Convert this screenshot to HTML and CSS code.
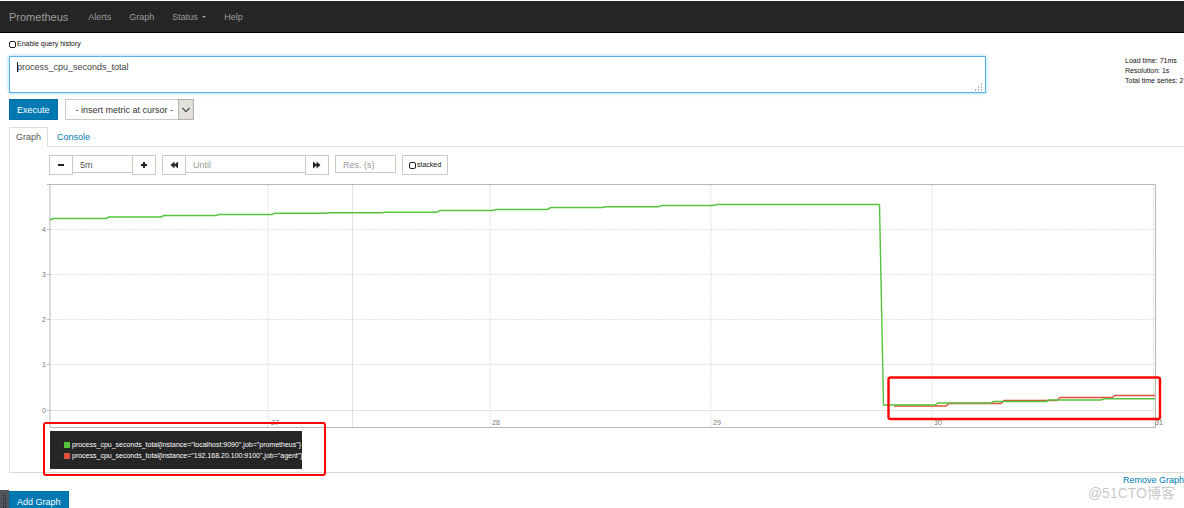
FILE: index.html
```html
<!DOCTYPE html>
<html lang="en">
<head>
<meta charset="utf-8">
<title>Prometheus</title>
<link rel="stylesheet" href="styles.css">
</head>
<body>
<nav class="navbar">
  <a class="brand" href="#">Prometheus</a>
  <a class="nav-link" href="#">Alerts</a>
  <a class="nav-link" href="#">Graph</a>
  <a class="nav-link status" href="#">Status <span class="caret"></span></a>
  <a class="nav-link" href="#">Help</a>
</nav>
<main class="page">
  <label class="history"><input class="check" type="checkbox"> Enable query history</label>
  <div class="query">
    <div class="editor">
      <textarea class="expression" aria-label="Expression">process_cpu_seconds_total</textarea>
      <span class="cursor"></span>
      <svg class="grip" viewBox="0 0 8 8" aria-hidden="true"><path d="M6 1h1M3 4h1M6 4h1M0 7h1M3 7h1M6 7h1" stroke="#999" stroke-width="1.4"/></svg>
    </div>
    <div class="stats">
      <div>Load time: 71ms</div>
      <div>Resolution: 1s</div>
      <div>Total time series: 2</div>
    </div>
  </div>
  <div class="actions">
    <button class="primary">Execute</button>
    <div class="metric">
      <select class="metric-select" aria-label="Metric"><option>- insert metric at cursor -</option></select>
      <svg class="arrow" viewBox="0 0 15 20" aria-hidden="true"><rect x="0.5" y="0.5" width="14" height="19" fill="#e3e1dc" stroke="#b5b1a8"/><path d="M4 8.500l3.500 3.500 3.500-3.500" fill="none" stroke="#444" stroke-width="1.200"/></svg>
    </div>
  </div>
  <div class="tabs">
    <a class="tab active" href="#">Graph</a>
    <a class="tab" href="#">Console</a>
  </div>
  <section class="panel">
    <div class="controls">
      <div class="group">
        <button class="tool" aria-label="Shrink range"><svg viewBox="0 0 8 8"><path d="M1 4h6" stroke="#222" stroke-width="2"/></svg></button>
        <input class="field range" value="5m" aria-label="Range">
        <button class="tool" aria-label="Grow range"><svg viewBox="0 0 8 8"><path d="M1 4h6M4 1v6" stroke="#222" stroke-width="2"/></svg></button>
      </div>
      <div class="group">
        <button class="tool" aria-label="Back"><svg viewBox="0 0 8 8"><path d="M4.500 0.500v7L0.500 4zM8 0.500v7L4 4z" fill="#222"/></svg></button>
        <input class="field until" placeholder="Until" aria-label="Until">
        <button class="tool" aria-label="Forward"><svg viewBox="0 0 8 8"><path d="M0 0.500v7L4 4zM3.500 0.500v7L7.500 4z" fill="#222"/></svg></button>
      </div>
      <input class="field res" placeholder="Res. (s)" aria-label="Resolution">
      <label class="stacked"><input class="check" type="checkbox"> stacked</label>
    </div>
    <svg class="chart" viewBox="38 182 1128 248" role="img" aria-label="process_cpu_seconds_total over time">
      <g class="grid dashed">
        <path d="M50 229.500H1155M50 274.500H1155M50 319.500H1155M50 364.500H1155"/>
        <path d="M268 185V427M490 185V427M711 185V427M932 185V427M1153.500 185V427"/>
      </g>
      <path class="grid" d="M352.500 185V427M50 410.500H1155"/>
      <path class="axis" d="M47 184.500H1155.500V427M47 229.500h3M47 274.500h3M47 319.500h3M47 364.500h3M47 410.500h3M50 184V427.500H1156"/>
      <g class="ticks">
        <text x="42" y="232">4</text><text x="42" y="277">3</text><text x="42" y="322">2</text><text x="42" y="367">1</text><text x="42" y="413">0</text>
        <text x="271" y="425">27</text><text x="492" y="425">28</text><text x="713" y="425">29</text><text x="934" y="425">30</text><text x="1155" y="425">31</text>
      </g>
      <path class="line red" d="M894 406H946L949 403.500H1001L1004 400.500H1057L1060 397.500H1112L1115 395.500H1155"/>
      <path class="line green" d="M50 220L53 218.500H106L109 217H161L164 215.500H216L219 214.500H272L275 213.200H326L329 212.700H382L385 212.200H437L440 210.500H493L496 209.500H547L551 207.500H602L606 206.800H658L662 205.500H713L717 204.500H879.500L883.500 405H935L938 403H991L994 401.500H1046L1049 400H1101L1104 398.700H1155"/>
      <rect class="mark" x="888.500" y="377.500" width="271.500" height="41.500" rx="2"/>
    </svg>
    <div class="legend">
      <div class="legend-row"><svg class="tick" viewBox="0 0 6 8"><path d="M1 5l1.500 2L5.500 1"/></svg><span class="swatch green-bg"></span>process_cpu_seconds_total{instance="localhost:9090",job="prometheus"}</div>
      <div class="legend-row"><svg class="tick" viewBox="0 0 6 8"><path d="M1 5l1.500 2L5.500 1"/></svg><span class="swatch red-bg"></span>process_cpu_seconds_total{instance="192.168.20.100:9100",job="agent"}</div>
      <span class="legend-mark"></span>
    </div>
  </section>
  <div class="remove"><a href="#">Remove Graph</a></div>
  <button class="primary add">Add Graph</button>
</main>
<svg class="handle" viewBox="0 0 9 18" aria-hidden="true"><rect width="9" height="18" fill="#50555c"/><path d="M3.500 5v13M5.500 5v13" stroke="#24282d" stroke-dasharray="1 1"/></svg>
<div class="watermark">@51CTO博客</div>
</body>
</html>
```
FILE: styles.css
```css
* { box-sizing: border-box; }
html { overflow: hidden; }
body {
  margin: 0;
  position: relative;
  height: 100vh;
  overflow: hidden;
  background: #fff;
  color: #333;
  font: 9px/12px "Liberation Sans", Arial, sans-serif;
}
a { color: #0079b3; text-decoration: none; }
button, input, textarea, select { font: inherit; color: inherit; margin: 0; border-radius: 0; }
.navbar {
  display: flex;
  align-items: center;
  height: 32px;
  padding: 0 9px;
  margin-top: 1px;
  background: #252525;
  border-bottom: 1px solid #000;
}
.navbar a { color: #9d9d9d; }
.brand { font-size: 11px; margin-right: 20px; }
.nav-link { margin-right: 18px; }
.caret { display: inline-block; margin-left: 2px; border: 2px solid transparent; border-top-color: #9d9d9d; border-bottom: 0; vertical-align: 2px; }
.page { padding-left: 9px; }
.history, .stats, .stacked, .legend { font-size: 7px; color: #111; }
.history { display: flex; align-items: center; gap: 1px; height: 12px; margin: 5px 0 6px; }
.check { appearance: none; width: 7px; height: 7px; border: 1px solid #222; border-radius: 2px; }
.query { display: flex; }
.editor { position: relative; flex: 1; }
.expression {
  display: block;
  width: 100%;
  height: 37px;
  padding: 4px 7px;
  border: 1px solid #57b4e6;
  outline: 0;
  resize: none;
  box-shadow: 0 0 4px #8fd0f2;
  color: #444;
}
.cursor { position: absolute; left: 8px; top: 6px; width: 1px; height: 10px; background: #222; }
.grip { position: absolute; right: 3px; bottom: 2px; width: 8px; height: 8px; }
.stats { display: flex; flex-direction: column; width: 198px; padding-left: 139px; white-space: nowrap; line-height: 10px; }
.actions { display: flex; gap: 7px; margin-top: 6px; }
.primary { height: 21px; padding: 0 7px; border: 1px solid #006fa5; background: #0079b3; color: #fff; }
.metric { position: relative; }
.metric-select { appearance: none; width: 129px; height: 21px; padding: 0 18px 0 10px; border: 1px solid #ccc9c2; background: #fff; }
.arrow { position: absolute; right: 0; top: 0; width: 16px; height: 21px; pointer-events: none; }
.tabs { display: flex; margin-top: 7px; border-bottom: 1px solid #ddd; }
.tab { padding: 3px 8px; border: 1px solid transparent; border-bottom: 0; }
.tab.active { margin-bottom: -1px; padding: 3px 6px; border-color: #ddd; background: #fff; color: #555; }
.panel { border: solid #ddddd5; border-width: 0 0 1px 1px; padding: 8px 18px 3px 28px; }
.controls { display: flex; gap: 6px; height: 20px; margin-left: 11px; }
.group { display: flex; }
.tool { display: grid; place-items: center; width: 24px; height: 20px; padding: 0; border: 1px solid #ccc9c2; background: #fff; }
.tool svg { width: 8px; height: 8px; }
.field { height: 18px; padding: 1px 7px 0; border: 1px solid #ccc9c2; color: #555; background: #fff; }
.field::placeholder { color: #999; }
.range, .until { margin: 0 -1px; }
.range { width: 61px; }
.until { width: 121px; }
.res { width: 61px; }
.stacked { display: flex; align-items: center; gap: 1px; height: 20px; padding: 0 6px; border: 1px solid #ccc9c2; }
.chart { display: block; width: 100%; height: auto; margin-top: 7px; overflow: visible; }
.grid { fill: none; stroke: #e2e2de; }
.dashed { stroke-dasharray: 2 1; }
.axis { fill: none; stroke: #b9b7b2; }
.ticks { fill: #777; font-size: 7px; }
.line { fill: none; stroke-width: 1.4; }
.red { stroke: #e0503c; }
.green { stroke: #54c43c; }
.mark { fill: none; stroke: #fb0505; stroke-width: 2.4; }
.legend { position: relative; width: 252px; margin: 1px 0 0 12px; padding: 8px 6px; background: #252525; color: #fff; }
.legend-row { display: flex; align-items: center; height: 11px; white-space: nowrap; }
.tick { flex: none; width: 6px; height: 8px; margin-right: 2px; }
.tick path { fill: none; stroke: #263746; }
.swatch { flex: none; width: 6px; height: 6px; margin-right: 2px; }
.green-bg { background: #54c43c; }
.red-bg { background: #e0503c; }
.legend-mark { position: absolute; inset: -9px -24px -7px -7px; border: 2px solid #fb0505; border-radius: 3px; }
.remove { margin-top: 1px; text-align: right; }
.add { display: block; margin-top: 5px; }
.handle { position: absolute; left: 0; bottom: 0; width: 9px; height: 18px; }
.watermark { position: absolute; right: 9px; bottom: 7px; font: 14px/16px "Liberation Sans", "Noto Sans CJK SC", sans-serif; color: #c9c9c9; }
```
